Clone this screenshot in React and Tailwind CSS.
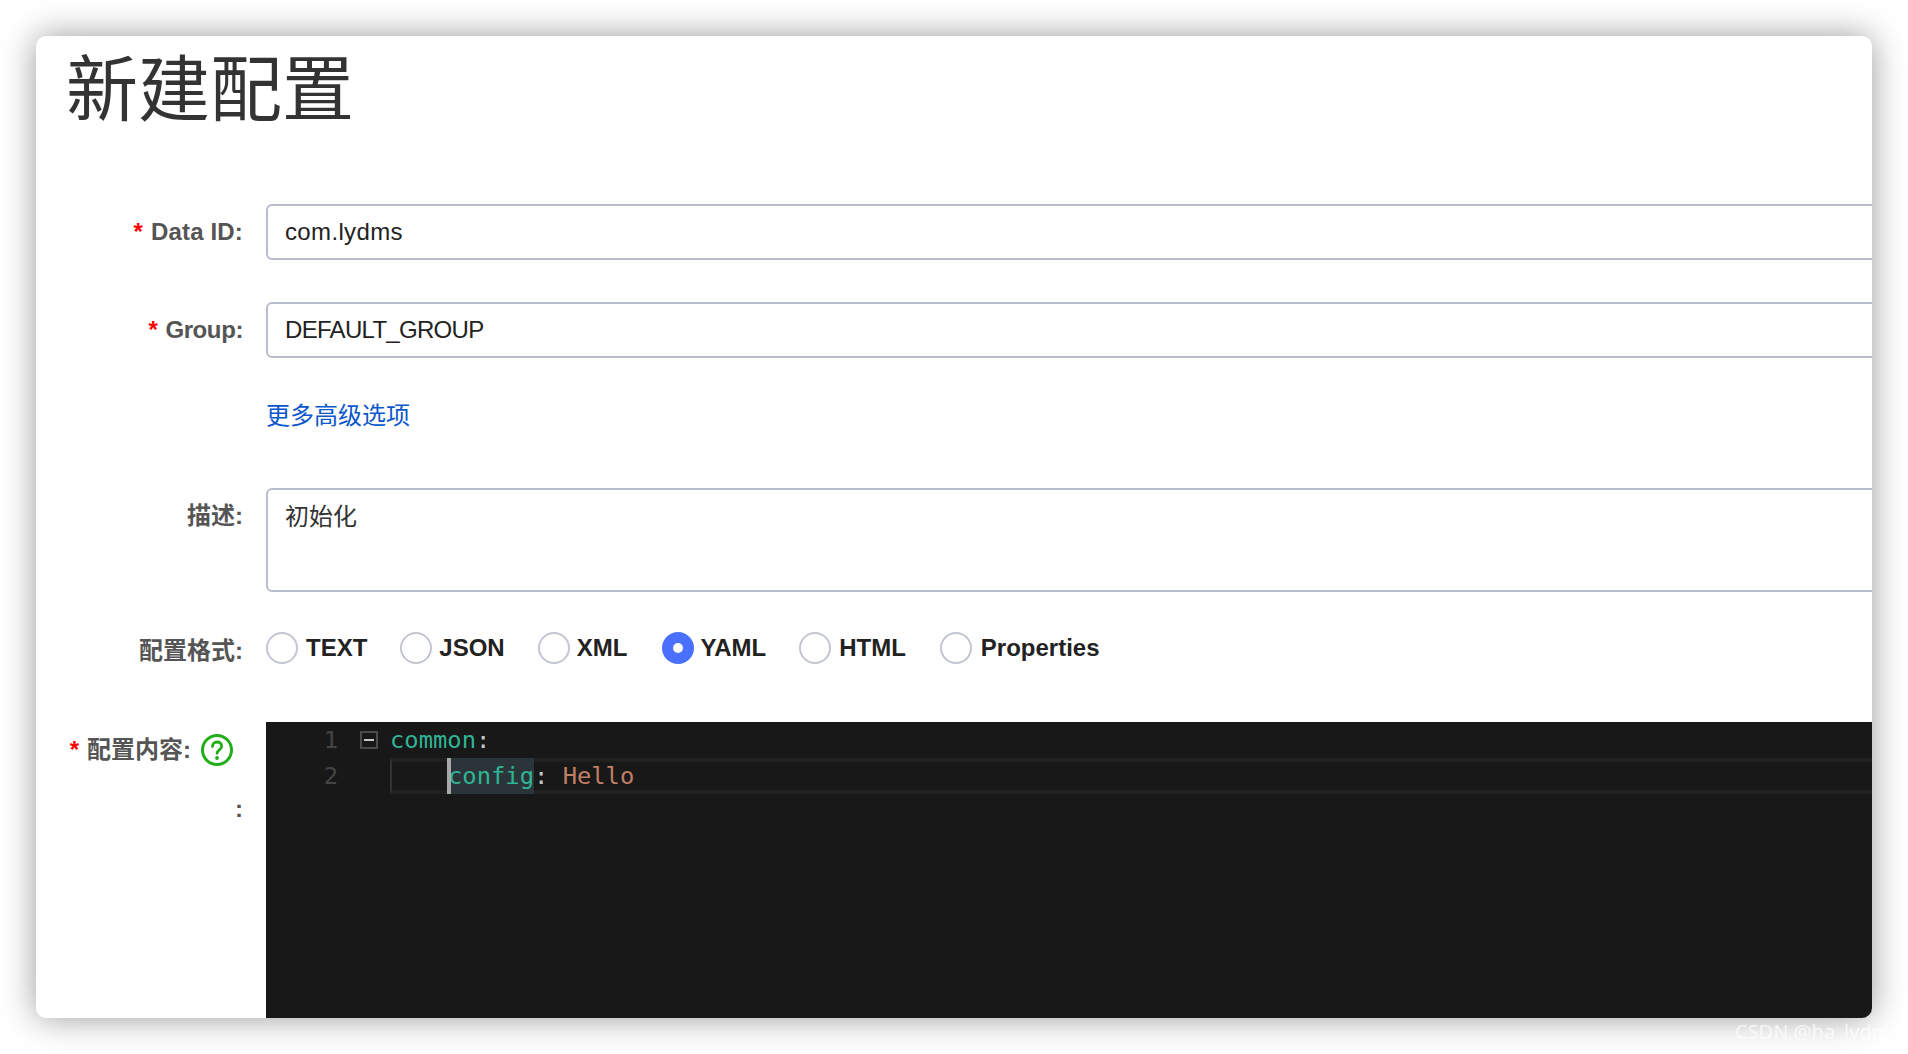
const sans = "font-['Liberation_Sans','Noto_Sans_CJK_SC',sans-serif]";

function Label({ required, children, className = "" }) {
  return (
    <div className={`w-[207px] shrink-0 text-right text-[24px] font-bold text-[#555555] ${className}`}>
      {required && <span className="mr-[8px] text-[#ff0000]">*</span>}
      {children}
    </div>
  );
}

function Radio({ label, checked, className, gap = "ml-[8px]" }) {
  return (
    <label className={`flex h-[32px] items-center ${className}`}>
      {checked ? (
        <span className="flex h-[32px] w-[32px] items-center justify-center rounded-full bg-[#4a70ff]">
          <span className="h-[10px] w-[10px] rounded-full bg-white" />
        </span>
      ) : (
        <span className="h-[32px] w-[32px] rounded-full border-2 border-[#c2c5d2] bg-white" />
      )}
      <span className={`${gap} text-[24px] leading-[32px] font-bold text-[#222222]`}>{label}</span>
    </label>
  );
}

export default function App() {
  return (
    <div className={`relative h-[1054px] w-[1908px] overflow-hidden bg-white pl-[36px] pt-[36px] ${sans}`}>
      <div className="h-[982px] w-[1836px] overflow-hidden rounded-[10px] bg-white shadow-[0_0_34px_rgba(0,0,0,0.4)]">
        <h1 className="h-[168px] pl-[30px] text-[72px] leading-[108px] font-normal text-[#333333]">新建配置</h1>

        <div className="flex gap-[23px]">
          <Label required className="leading-[55px] tracking-[0.15px]">Data ID:</Label>
          <input readOnly value="com.lydms" className="h-[56px] w-[1620px] shrink-0 rounded-[6px] border-2 border-[#b8bccb] px-[17px] text-[24px] tracking-[0.35px] text-[#222222] outline-none" />
        </div>

        <div className="mt-[42px] flex gap-[23px]">
          <Label required className="leading-[55px] tracking-[-0.4px]">Group:</Label>
          <input readOnly value="DEFAULT_GROUP" className="h-[56px] w-[1620px] shrink-0 rounded-[6px] border-2 border-[#b8bccb] px-[17px] text-[24px] tracking-[-0.7px] text-[#222222] outline-none" />
        </div>

        <div className="mb-[56px] mt-[42px] pl-[230px]">
          <a className="block text-[24px] leading-[32px] text-[#0b57cc]">更多高级选项</a>
        </div>

        <div className="flex gap-[23px]">
          <Label className="leading-[56px]">描述:</Label>
          <textarea readOnly value="初始化" className="h-[104px] w-[1620px] shrink-0 resize-none rounded-[6px] border-2 border-[#b8bccb] px-[17px] py-[11px] text-[24px] leading-[32px] text-[#333333] outline-none" />
        </div>

        <div className="mt-[40px] flex items-start gap-[23px]">
          <Label className="leading-[38px]">配置格式:</Label>
          <div className="flex">
            <Radio label="TEXT" className="mr-[33px]" />
            <Radio label="JSON" gap="ml-[7px]" className="mr-[33px]" />
            <Radio label="XML" gap="ml-[7px]" className="mr-[35px]" />
            <Radio label="YAML" gap="ml-[6px]" checked className="mr-[33px]" />
            <Radio label="HTML" className="mr-[34px]" />
            <Radio label="Properties" gap="ml-[9px]" />
          </div>
        </div>

        <div className="mt-[52px] flex gap-[23px]">
          <Label className="leading-[55px]">
            <div className="flex items-center justify-end pr-[10px]">
              <span className="mr-[8px] text-[#ff0000]">*</span>
              <span>配置内容:</span>
              <svg viewBox="0 0 32 32" className="ml-[10px] h-[32px] w-[32px]" fill="none">
                <circle cx="16" cy="16" r="14.5" stroke="#1fae17" strokeWidth="3" />
                <path d="M11.5 12.5c0-2.7 2-4.5 4.6-4.5 2.6 0 4.5 1.7 4.5 4 0 1.8-.9 2.8-2.3 3.8-1.4 1-2.2 1.8-2.2 3.5" stroke="#1fae17" strokeWidth="2.8" strokeLinecap="round" />
                <circle cx="16" cy="24" r="1.9" fill="#1fae17" />
              </svg>
            </div>
            <div className="mt-[4px]">:</div>
          </Label>

          <div className="h-[296px] w-[1606px] shrink-0 bg-[#181818] font-['DejaVu_Sans_Mono',monospace] text-[23.8px] leading-[36px]">
            <div className="flex h-[36px]">
              <div className="w-[72px] text-right text-[#444444]">1</div>
              <div className="ml-[22px] flex h-[36px] w-[18px] items-center">
                <span className="flex h-[18px] w-[18px] items-center justify-center border-2 border-[#4a4a4a]">
                  <span className="h-[2px] w-[10px] bg-[#c8c8c8]" />
                </span>
              </div>
              <div className="ml-[12px] text-[#2fb596]">
                common<span className="text-[#c8c8c8]">:</span>
              </div>
            </div>
            <div className="flex h-[36px]">
              <div className="w-[72px] text-right text-[#444444]">2</div>
              <div className="ml-[52px] h-[36px] flex-1 border-y-4 border-l-2 border-[#202020] border-l-[#333333]">
                <div className="-mt-[4px] whitespace-pre pl-[56px]">
                  <span className="relative inline-block h-[36px] bg-[#2b3539] text-[#2fb596]">
                    <span className="absolute -left-[1px] top-0 h-[36px] w-[4px] bg-[#a8a8a8]" />
                    config
                  </span>
                  <span className="text-[#c8c8c8]">: </span>
                  <span className="text-[#c07f65]">Hello</span>
                </div>
              </div>
            </div>
          </div>
        </div>
      </div>

      <div className="absolute left-[1735px] top-[1019px] font-['Noto_Sans',sans-serif] text-[20px] leading-[26px] text-white/70">
        CSDN @ha_lydms
      </div>
    </div>
  );
}
